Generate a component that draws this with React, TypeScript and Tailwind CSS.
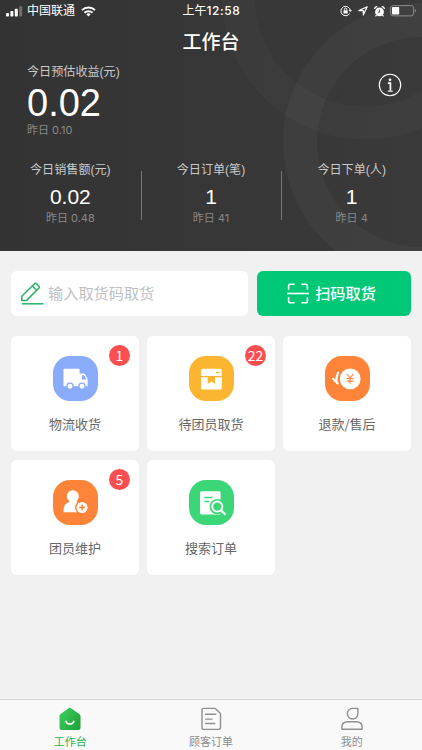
import type { ReactNode } from 'react'

function SignalIcon() {
  return (
    <svg width="17" height="11" viewBox="0 0 17 11" fill="#fff">
      <rect x="0" y="7" width="3" height="3.5" rx="0.7" />
      <rect x="4.4" y="5" width="3" height="5.5" rx="0.7" />
      <rect x="8.8" y="2.8" width="3" height="7.7" rx="0.7" />
      <rect x="13.2" y="0.2" width="3" height="10.3" rx="0.7" opacity="0.3" />
    </svg>
  )
}

function WifiIcon() {
  return (
    <svg width="15" height="11" viewBox="0 0 15 11" fill="none" stroke="#fff" strokeWidth="2">
      <path d="M1 4.1a9.4 9.4 0 0 1 13 0" />
      <path d="M3.5 6.8a5.8 5.8 0 0 1 8 0" />
      <path d="M7.5 10.6 5.3 8.3a3.2 3.2 0 0 1 4.4 0z" fill="#fff" stroke="none" />
    </svg>
  )
}

function LockRotationIcon() {
  return (
    <svg width="12" height="12" viewBox="0 0 12 12" fill="none" stroke="#fff" strokeWidth="1">
      <path d="M9.7 8.4a4.7 4.7 0 1 1 .6-2.9" />
      <path d="M8.7 5.1h3.2l-1.6 2z" fill="#fff" stroke="none" />
      <rect x="3.5" y="5.3" width="4.2" height="3.1" rx="0.4" fill="#fff" stroke="none" />
      <path d="M4.4 5.4V4.3a1.2 1.2 0 0 1 2.4 0v1.1" strokeWidth="0.9" />
    </svg>
  )
}

function LocationIcon() {
  return (
    <svg width="10" height="10" viewBox="0 0 10 10" fill="none" stroke="#fff" strokeWidth="1.2" strokeLinejoin="round">
      <path d="M9.2.8.9 4.6h4.4v4.5z" />
    </svg>
  )
}

function AlarmIcon() {
  return (
    <svg width="11" height="11" viewBox="0 0 11 11">
      <circle cx="5.5" cy="5.9" r="4.4" fill="#fff" />
      <path d="M.7 3A2 2 0 0 1 3.3.8M10.3 3A2 2 0 0 0 7.7.8M2.5 9.2l-1 1.2M8.500 9.200l1 1.200" stroke="#fff" strokeWidth="1.3" fill="none" />
      <path d="M5.6 3.500v2.700H3.900" stroke="#353535" strokeWidth="0.8" fill="none" />
    </svg>
  )
}

function BatteryIcon() {
  return (
    <svg width="27" height="12" viewBox="0 0 27 12">
      <rect x="0.6" y="0.6" width="23" height="10.3" rx="2.5" fill="none" stroke="#8b8b8b" strokeWidth="1" />
      <rect x="2" y="2" width="7.2" height="7.5" rx="0.8" fill="#fff" />
      <path d="M24.9 4v3.6a2 2 0 0 0 0-3.6z" fill="#8b8b8b" />
    </svg>
  )
}

function InfoIcon() {
  return (
    <svg width="24" height="24" viewBox="0 0 24 24" fill="none" stroke="#fff">
      <circle cx="12" cy="12" r="10.7" strokeWidth="1.1" />
      <circle cx="12" cy="6.8" r="1.35" fill="#fff" stroke="none" />
      <path d="M9.9 10.1h2.5v7.6" strokeWidth="1.7" />
      <path d="M9.8 18.2h5" strokeWidth="1.1" />
    </svg>
  )
}

function PencilIcon() {
  return (
    <svg width="24" height="24" viewBox="0 0 24 24" fill="none" stroke="#26b562" strokeWidth="1.5" strokeLinejoin="round">
      <path d="M1.8 18.6V14.2L14.6 1.7q.9-.7 1.8.1l2.6 2.6q.7.8 0 1.6L6.3 18.6z" />
      <path d="m12.4 4 4.3 4.2" />
      <path d="M1.8 21.8h21.7" />
    </svg>
  )
}

function ScanIcon() {
  return (
    <svg width="22" height="21" viewBox="0 0 22 21" fill="none" stroke="#fff" strokeWidth="1.6">
      <path d="M1.6 6.8V3q0-1.8 1.8-1.8h4.2M14.4 1.2h4.2q1.8 0 1.8 1.8v3.8M1.6 14.2V18q0 1.8 1.8 1.8h4.2M14.4 19.8h4.2q1.8 0 1.8-1.8v-3.8" />
      <path d="M0 10.5h22" />
    </svg>
  )
}

function TruckIcon() {
  return (
    <svg width="45" height="45" viewBox="0 0 45 45">
      <path d="M11.6 12.7H25.6q1 0 1 1V17.4h3.8q1.6 0 2.3 1.5l1.9 4.4v7H10.5V13.8q0-1.1 1.1-1.1z" fill="#fff" />
      <path d="M29 19.2h1.7q.8 0 1.1.7l1.5 3.7H29z" fill="#8aabf9" />
      <circle cx="17" cy="30.2" r="3.1" fill="#fff" stroke="#8aabf9" strokeWidth="1.3" />
      <circle cx="29" cy="30.2" r="3.1" fill="#fff" stroke="#8aabf9" strokeWidth="1.3" />
    </svg>
  )
}

function BoxIcon() {
  return (
    <svg width="45" height="45" viewBox="0 0 45 45" fill="#fff">
      <path d="M14 12.8h16.8q2 0 2 2V20H12v-5.2q0-2 2-2z" />
      <path d="M12 21.3h6.7v6.7l3.7-2.4 3.7 2.4v-6.7h6.7v10.6q0 1.5-1.5 1.5H13.5q-1.5 0-1.5-1.5z" />
      <rect x="27" y="15.7" width="3.5" height="1.6" rx="0.5" fill="#fcb530" />
    </svg>
  )
}

function RefundIcon() {
  return (
    <svg width="45" height="45" viewBox="0 0 45 45" fill="none">
      <circle cx="25.2" cy="22.9" r="10.4" fill="#fff" />
      <path d="m21.9 18 3.2 4.1 3.2-4.1M25.1 22v5.8M21.6 22.5h7M21.6 25.1h7" stroke="#fe8439" strokeWidth="1.2" />
      <path d="M13.2 16.7q-2.6 4.6-1.3 10.2M8.1 22.8l4.7 4.7" stroke="#fff" strokeWidth="2.1" strokeLinecap="round" />
    </svg>
  )
}

function MemberIcon() {
  return (
    <svg width="45" height="45" viewBox="0 0 45 45">
      <path d="M19.7 10.2a6 6 0 0 1 6.1 6.1c0 2-1 3.3-1.8 4.6-.5 1 .1 1.7 1.2 2.1l4.4 1.8v7.400H10.500c0-4.700.600-7.600 4-9.100 1.600-.700 2-1.300 1.300-2.500-.900-1.300-2-2.400-2-4.300a6 6 0 0 1 5.900-6.100z" fill="#fff" />
      <circle cx="29.1" cy="27.5" r="7" fill="#fe8439" />
      <circle cx="29.1" cy="27.5" r="5.5" fill="#fff" />
      <path d="M29.1 24.5v6M26.1 27.5h6" stroke="#fe8439" strokeWidth="1.5" />
    </svg>
  )
}

function SearchOrderIcon() {
  return (
    <svg width="45" height="45" viewBox="0 0 45 45" fill="none">
      <rect x="11" y="11.2" width="20.6" height="23.2" rx="1.5" fill="#fff" />
      <path d="M15.3 17.5h8.2M15.3 21.4h5" stroke="#3bd677" strokeWidth="1.5" />
      <circle cx="28.3" cy="26.6" r="7.7" fill="#3bd677" />
      <circle cx="28.3" cy="26.6" r="5.1" stroke="#fff" strokeWidth="1.8" />
      <path d="m32.7 31 3.2 3.1" stroke="#fff" strokeWidth="2.2" strokeLinecap="round" />
    </svg>
  )
}

function HomeTabIcon() {
  return (
    <svg width="24" height="24" viewBox="0 0 24 24">
      <defs>
        <linearGradient id="home" x1="0" y1="0" x2="1" y2="0.6">
          <stop offset="0.3" stopColor="#36c455" />
          <stop offset="1" stopColor="#22a63c" />
        </linearGradient>
      </defs>
      <path d="M10.6 1.2q1.200-.8 2.400 0l8.400 5.800q1.100.8 1.100 2.100V21q0 2-2 2h-17q-2 0-2-2V9.100q0-1.300 1.100-2.100z" fill="url(#home)" />
      <path d="M8 14.200a4 3.700 0 0 0 7.800 0" fill="none" stroke="#fff" strokeWidth="1.5" strokeLinecap="round" />
    </svg>
  )
}

function OrderTabIcon() {
  return (
    <svg width="24" height="24" viewBox="0 0 24 24" fill="none" stroke="#909093" strokeWidth="1.4" strokeLinejoin="round">
      <path d="M4.500 1.400h11.800l5.200 5V20.600q0 1.800-1.800 1.800H4.500q-1.500 0-1.500-1.500V2.900q0-1.500 1.500-1.500z" />
      <path d="M6.600 7.300h10.200M6.600 12.100h6.400M6.600 16.500h9.200" strokeLinecap="round" />
    </svg>
  )
}

function MineTabIcon() {
  return (
    <svg width="24" height="24" viewBox="0 0 24 24" fill="none" stroke="#909093" strokeWidth="1.4" strokeLinejoin="round">
      <path d="M12.300 1.400h5.600v5.300a5.300 5.300 0 1 1-5.600-5.300z" />
      <path d="M1.900 22.200v-1.700q0-5.700 5.700-5.700h8.800q5.700 0 5.700 5.700v1.700z" />
    </svg>
  )
}

interface Entry {
  label: string
  color: string
  icon: ReactNode
  badge?: number
}

const stats = [
  { label: '今日销售额(元)', value: '0.02', yesterday: '0.48' },
  { label: '今日订单(笔)', value: '1', yesterday: '41' },
  { label: '今日下单(人)', value: '1', yesterday: '4' },
]

const entries: Entry[] = [
  { label: '物流收货', color: 'bg-[#8aabf9]', icon: <TruckIcon />, badge: 1 },
  { label: '待团员取货', color: 'bg-[#fcb530]', icon: <BoxIcon />, badge: 22 },
  { label: '退款/售后', color: 'bg-[#fe8439]', icon: <RefundIcon /> },
  { label: '团员维护', color: 'bg-[#fe8439]', icon: <MemberIcon />, badge: 5 },
  { label: '搜索订单', color: 'bg-[#3bd677]', icon: <SearchOrderIcon /> },
]

const tabs = [
  { label: '工作台', icon: <HomeTabIcon />, active: true },
  { label: '顾客订单', icon: <OrderTabIcon />, active: false },
  { label: '我的', icon: <MineTabIcon />, active: false },
]

function StatusBar() {
  return (
    <div className="grid h-[22px] grid-cols-3 items-center pl-1.5 pr-[5px] text-[12px] leading-[22px]">
      <div className="flex items-center">
        <SignalIcon />
        <span className="ml-1 mr-1.5">中国联通</span>
        <WifiIcon />
      </div>
      <div className="text-center whitespace-nowrap">
        上午<span className="font-['Inter',sans-serif] font-medium tracking-[0.6px]">12:58</span>
      </div>
      <div className="flex items-center justify-end">
        <LockRotationIcon />
        <span className="w-[6px]" />
        <LocationIcon />
        <span className="w-[6px]" />
        <AlarmIcon />
        <span className="w-[5px]" />
        <BatteryIcon />
      </div>
    </div>
  )
}

function Header() {
  return (
    <header className="relative h-[251px] overflow-hidden bg-linear-to-r from-[#333333] to-[#3a3a3a] text-white">
      <svg className="absolute inset-0" width="422" height="251" fill="none" stroke="#fff">
        <circle cx="365" cy="-4" r="127" strokeWidth="33" strokeOpacity="0.022" />
        <circle cx="422" cy="142" r="122" strokeWidth="34" strokeOpacity="0.03" />
      </svg>
      <div className="relative">
        <StatusBar />
        <h1 className="h-[41px] text-center text-[19px] leading-[42px] font-medium">工作台</h1>
        <div className="flex justify-between pl-[27px] pr-5">
          <div>
            <div className="h-[18px] text-[12.100px] leading-[18px] text-[#c9c9c9]">今日预估收益(元)</div>
            <div className="h-[41px] text-[38px] leading-[44px]">0.02</div>
            <div className="h-4 font-['Inter','Noto_Sans_CJK_SC',sans-serif] text-[11px] leading-4 text-[#888888]">昨日 0.10</div>
          </div>
          <button className="mt-[10px] self-start"><InfoIcon /></button>
        </div>
        <div className="mt-[23px] grid grid-cols-3">
          {stats.map((s, i) => (
            <div key={s.label} className="relative text-center">
              <div className="h-[18px] text-[12.100px] leading-[18px] text-[#c9c9c9]">{s.label}</div>
              <div className="h-[31px] text-[21px] leading-[35px]">{s.value}</div>
              <div className="h-4 font-['Inter','Noto_Sans_CJK_SC',sans-serif] text-[11px] leading-4 text-[#888888]">昨日 {s.yesterday}</div>
              {i > 0 && <span className="absolute top-[10px] left-0 h-[49px] w-px bg-[#777777]" />}
            </div>
          ))}
        </div>
      </div>
    </header>
  )
}

function EntryCard({ entry }: { entry: Entry }) {
  return (
    <div className="relative flex flex-col items-center rounded-md bg-white pt-[20px]">
      <div className={`size-[45px] rounded-[17px] ${entry.color}`}>{entry.icon}</div>
      <div className="mt-[13px] font-['Noto_Sans_CJK_SC',sans-serif] text-[13px] leading-5 text-[#666666]">{entry.label}</div>
      {entry.badge && (
        <span className="absolute top-[9px] right-[9px] flex size-[21px] items-center justify-center rounded-full bg-[#fb4e50] font-['Noto_Sans_CJK_SC',sans-serif] text-[14px] leading-[21px] text-white">
          {entry.badge}
        </span>
      )}
    </div>
  )
}

export default function App() {
  return (
    <div className="flex h-[750px] w-[422px] flex-col bg-[#f1f1f1] font-['Liberation_Sans','Noto_Sans_CJK_SC',sans-serif]">
      <Header />
      <main className="flex-1 px-[11px] pt-5">
        <div className="flex h-[45px] gap-[9px]">
          <div className="flex flex-1 items-center rounded-md bg-white pl-[9px] text-[15.2px] text-[#c0c0c6]">
            <PencilIcon />
            <span className="ml-1 pt-px">输入取货码取货</span>
          </div>
          <button className="flex w-[154px] items-center justify-center gap-[6px] rounded-md bg-[#00c877] pr-[5px] text-[15.2px] font-medium text-white">
            <ScanIcon />
            <span className="pt-px">扫码取货</span>
          </button>
        </div>
        <div className="mt-5 grid auto-rows-[115px] grid-cols-3 gap-x-2 gap-y-[8.5px]">
          {entries.map((e) => (
            <EntryCard key={e.label} entry={e} />
          ))}
        </div>
      </main>
      <nav className="grid h-[51px] grid-cols-3 border-t border-[#d5d5d5] bg-[#f9f9f9]">
        {tabs.map((tab) => (
          <div key={tab.label} className={`flex flex-col items-center pt-[7px] text-[11px] ${tab.active ? 'text-[#2cb145]' : 'text-[#8e8e91]'}`}>
            {tab.icon}
            <span className="leading-[22px]">{tab.label}</span>
          </div>
        ))}
      </nav>
    </div>
  )
}
